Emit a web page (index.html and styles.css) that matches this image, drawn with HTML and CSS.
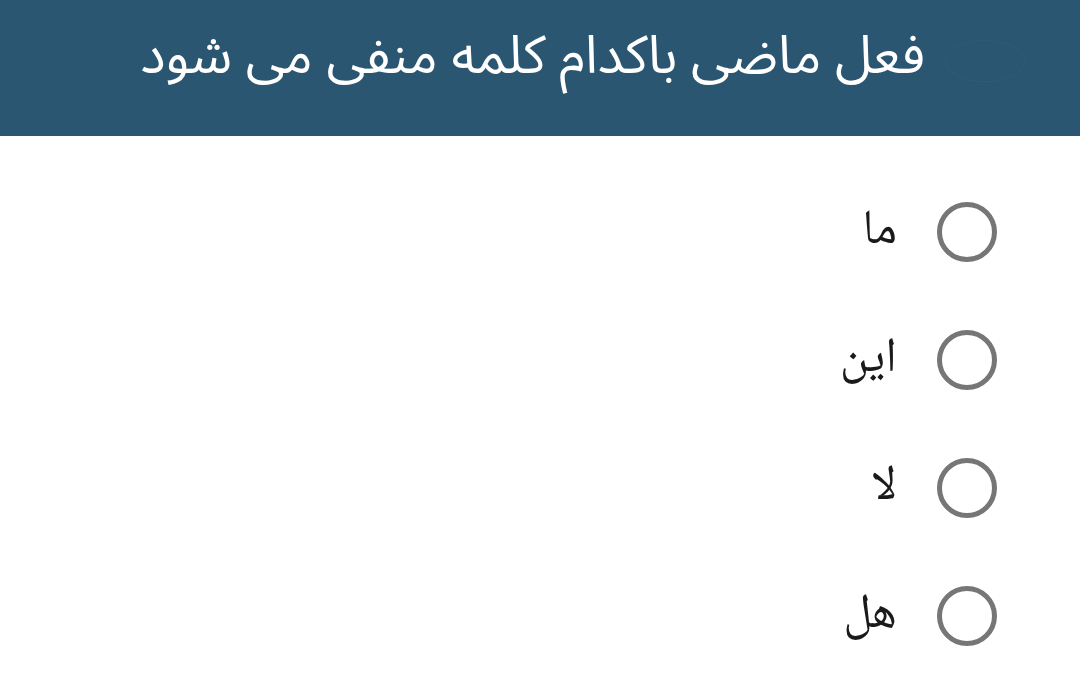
FILE: index.html
```html
<!DOCTYPE html>
<html lang="fa" dir="rtl">
<head>
<meta charset="utf-8">
<link rel="stylesheet" href="styles.css">
</head>
<body>
<header class="bar">
  <span class="ghost"></span>
  <h1 class="title">فعل ماضی باکدام کلمه منفی می شود</h1>
</header>
<ul class="options">
  <li class="option"><span class="radio"></span><span class="label">ما</span></li>
  <li class="option"><span class="radio"></span><span class="label">این</span></li>
  <li class="option"><span class="radio"></span><span class="label">لا</span></li>
  <li class="option"><span class="radio"></span><span class="label">هل</span></li>
</ul>
</body>
</html>
```
FILE: styles.css
```css
html, body {
  margin: 0;
  padding: 0;
  background: #ffffff;
  font-family: "Noto Sans Arabic", "DejaVu Sans", sans-serif;
}
.bar {
  height: 136px;
  background: #2a5671;
  display: flex;
  align-items: center;
  padding-right: 55px;
  box-sizing: border-box;
  gap: 20px;
}
.ghost {
  width: 78px;
  height: 40px;
  border: 1px dotted rgba(255,255,255,0.06);
  border-radius: 50%;
  margin-top: -14px;
}
.title {
  margin: 0;
  color: #ffffff;
  font-weight: normal;
  font-size: 53px;
  line-height: 1;
  margin-top: -24px;
}
.options {
  list-style: none;
  margin: 0;
  padding: 32px 83px 0 0;
}
.option {
  height: 128px;
  display: flex;
  align-items: center;
  gap: 40px;
}
.radio {
  width: 60px;
  height: 60px;
  box-sizing: border-box;
  border: 5px solid #767676;
  border-radius: 50%;
}
.label {
  font-family: "Noto Naskh Arabic", "DejaVu Sans", sans-serif;
  font-size: 49px;
  line-height: 1;
  color: #1a1a1a;
}
```
